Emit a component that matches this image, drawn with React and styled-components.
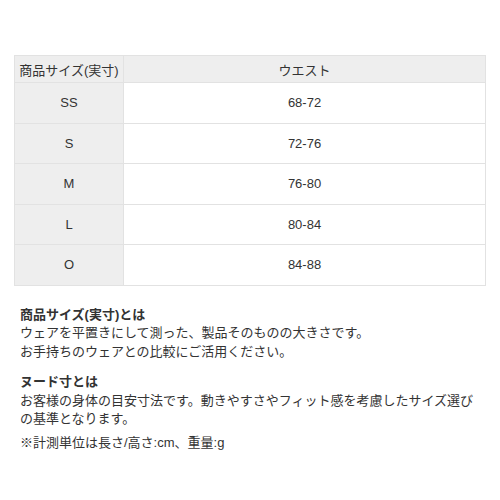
import { createGlobalStyle, styled } from "styled-components";

const GlobalStyle = createGlobalStyle`
  body {
    margin: 0;
    background: #fff;
    font-family: "Liberation Sans", "Noto Sans CJK JP", sans-serif;
    color: #333;
  }
`;

const Page = styled.div`
  padding: 55px 14px 0 14px;
`;

const Table = styled.table`
  width: 472px;
  border-collapse: collapse;
  font-size: 13px;
  table-layout: fixed;
`;

const Th = styled.th`
  background: #eeeeee;
  border: 1px solid #e2e2e2;
  font-weight: normal;
  height: 26px;
  padding: 0;
  text-align: center;
  width: ${(p) => p.$width || "auto"};
`;

const Td = styled.td`
  background: ${(p) => (p.$head ? "#eeeeee" : "#fff")};
  border: 1px solid #e2e2e2;
  height: 39.5px;
  padding: 0;
  text-align: center;
`;

const Notes = styled.div`
  padding: 20px 6px 0 6px;
  font-size: 13px;
  line-height: 18.5px;
`;

const Block = styled.div`
  margin-bottom: 12px;
`;

const Title = styled.div`
  font-weight: bold;
`;

const Small = styled.div`
  margin-top: -10px;
  line-height: 23px;
`;

const rows = [
  ["SS", "68-72"],
  ["S", "72-76"],
  ["M", "76-80"],
  ["L", "80-84"],
  ["O", "84-88"],
];

export default function App() {
  return (
    <Page>
      <GlobalStyle />
      <Table>
        <thead>
          <tr>
            <Th $width="108px">商品サイズ(実寸)</Th>
            <Th>ウエスト</Th>
          </tr>
        </thead>
        <tbody>
          {rows.map(([size, waist]) => (
            <tr key={size}>
              <Td $head>{size}</Td>
              <Td>{waist}</Td>
            </tr>
          ))}
        </tbody>
      </Table>
      <Notes>
        <Block>
          <Title>商品サイズ(実寸)とは</Title>
          <div>ウェアを平置きにして測った、製品そのものの大きさです。</div>
          <div>お手持ちのウェアとの比較にご活用ください。</div>
        </Block>
        <Block>
          <Title>ヌード寸とは</Title>
          <div>お客様の身体の目安寸法です。動きやすさやフィット感を考慮したサイズ選びの基準となります。</div>
        </Block>
        <Small>※計測単位は長さ/高さ:cm、重量:g</Small>
      </Notes>
    </Page>
  );
}
